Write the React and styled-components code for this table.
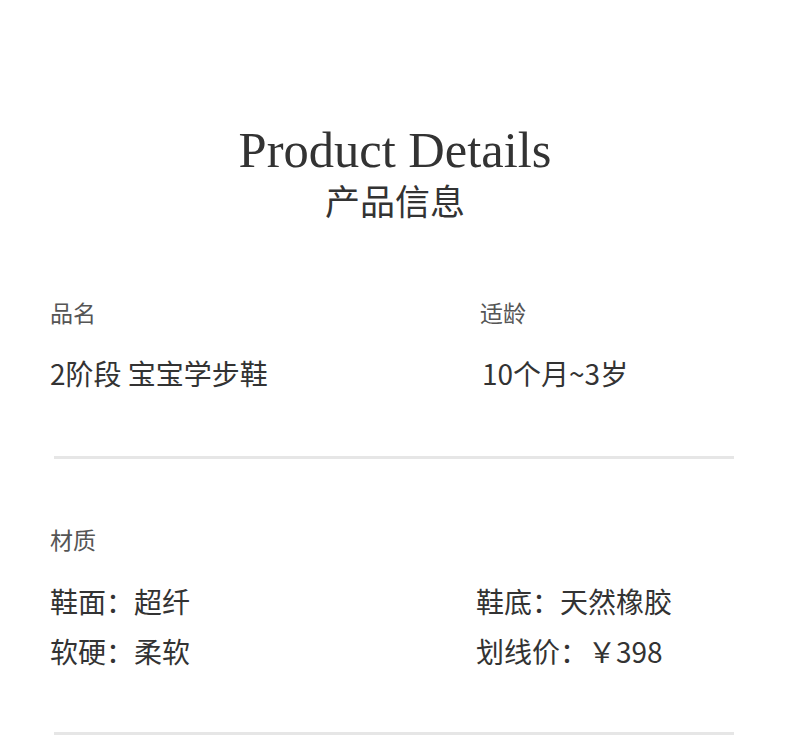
import React from "react";
import styled, { createGlobalStyle } from "styled-components";

const GlobalStyle = createGlobalStyle`
  html, body {
    margin: 0;
    padding: 0;
    background: #fff;
  }
  body {
    font-family: "Noto Sans CJK SC", "Noto Sans", sans-serif;
    color: #333;
  }
`;

const Page = styled.div`
  width: 790px;
  padding: 120px 0 0;
  box-sizing: border-box;
`;

const Header = styled.header`
  display: flex;
  flex-direction: column;
  align-items: center;
`;

const Title = styled.h1`
  margin: 0;
  font-family: "Liberation Serif", "Times New Roman", serif;
  font-weight: 400;
  font-size: 50.5px;
  line-height: 60px;
  color: #333;
`;

const Subtitle = styled.h2`
  margin: 0;
  font-weight: 400;
  font-size: 35px;
  line-height: 40px;
  color: #333;
`;

const Section = styled.section`
  margin: ${({ $top }) => $top}px 56px 0 54px;
  padding-bottom: ${({ $bottom }) => $bottom}px;
  border-bottom: 3px solid #e6e6e6;
`;

const Grid = styled.div`
  display: grid;
  grid-template-columns: ${({ $col }) => $col}px 1fr;
  margin-left: -4px;
`;

const Label = styled.div`
  font-size: 23px;
  line-height: 30px;
  color: #555;
`;

const Value = styled.div`
  font-size: 28px;
  line-height: 40px;
  color: #333;
  margin-top: ${({ $gap }) => $gap}px;
  padding-left: ${({ $indent }) => $indent || 0}px;
`;

const Stack = styled.div`
  display: flex;
  flex-direction: column;
`;

export default function App() {
  return (
    <Page>
      <GlobalStyle />
      <Header>
        <Title>Product Details</Title>
        <Subtitle>产品信息</Subtitle>
      </Header>

      <Section $top={77} $bottom={63}>
        <Grid $col={430}>
          <Stack>
            <Label>品名</Label>
            <Value $gap={26}>2阶段 宝宝学步鞋</Value>
          </Stack>
          <Stack>
            <Label>适龄</Label>
            <Value $gap={26} $indent={2}>10个月~3岁</Value>
          </Stack>
        </Grid>
      </Section>

      <Section $top={65} $bottom={61}>
        <Grid $col={426}>
          <Label>材质</Label>
        </Grid>
        <Grid $col={426}>
          <Stack>
            <Value $gap={27}>鞋面：超纤</Value>
            <Value $gap={10}>软硬：柔软</Value>
          </Stack>
          <Stack>
            <Value $gap={27}>鞋底：天然橡胶</Value>
            <Value $gap={10}>划线价：￥398</Value>
          </Stack>
        </Grid>
      </Section>
    </Page>
  );
}
